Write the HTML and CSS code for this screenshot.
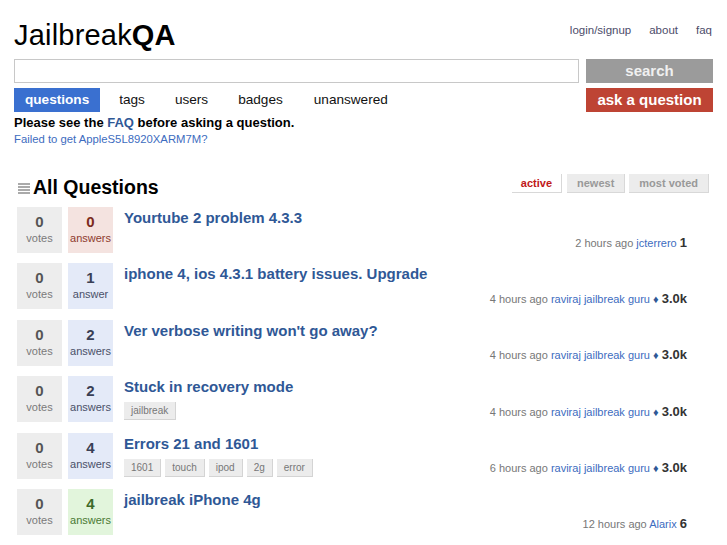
FILE: index.html
```html
<!DOCTYPE html>
<html>
<head>
<meta charset="utf-8">
<title>JailbreakQA</title>
<link rel="stylesheet" href="styles.css">
</head>
<body>
<div class="page">
  <div class="top">
    <div class="logo">Jailbreak<b>QA</b></div>
    <div class="toplinks"><a>login/signup</a><a>about</a><a>faq</a></div>
  </div>
  <div class="searchrow">
    <div class="searchbox"></div>
    <div class="btn btn-search">search</div>
  </div>
  <div class="navrow">
    <div class="nav">
      <a class="tab on">questions</a><a class="tab">tags</a><a class="tab">users</a><a class="tab">badges</a><a class="tab">unanswered</a>
    </div>
    <div class="btn btn-ask">ask a question</div>
  </div>
  <p class="notice">Please see the <a>FAQ</a> before asking a question.</p>
  <p class="failed"><a>Failed to get AppleS5L8920XARM7M?</a></p>

  <div class="headrow">
    <h1><span class="listicon"><i></i><i></i><i></i><i></i></span>All Questions</h1>
    <div class="sorts"><a class="sort on">active</a><a class="sort">newest</a><a class="sort">most voted</a></div>
  </div>

  <div class="q">
    <div class="stats"><div class="box votes"><b>0</b><span>votes</span></div><div class="box ans zero"><b>0</b><span>answers</span></div></div>
    <div class="body"><h2>Yourtube 2 problem 4.3.3</h2>
      <div class="foot"><div class="tags"></div><div class="meta">2 hours ago <a>jcterrero</a> <b>1</b></div></div></div>
  </div>
  <div class="q">
    <div class="stats"><div class="box votes"><b>0</b><span>votes</span></div><div class="box ans some"><b>1</b><span>answer</span></div></div>
    <div class="body"><h2>iphone 4, ios 4.3.1 battery issues. Upgrade</h2>
      <div class="foot"><div class="tags"></div><div class="meta">4 hours ago <a>raviraj jailbreak guru</a> <em>&#9830;</em> <b>3.0k</b></div></div></div>
  </div>
  <div class="q">
    <div class="stats"><div class="box votes"><b>0</b><span>votes</span></div><div class="box ans some"><b>2</b><span>answers</span></div></div>
    <div class="body"><h2>Ver verbose writing won't go away?</h2>
      <div class="foot"><div class="tags"></div><div class="meta">4 hours ago <a>raviraj jailbreak guru</a> <em>&#9830;</em> <b>3.0k</b></div></div></div>
  </div>
  <div class="q">
    <div class="stats"><div class="box votes"><b>0</b><span>votes</span></div><div class="box ans some"><b>2</b><span>answers</span></div></div>
    <div class="body"><h2>Stuck in recovery mode</h2>
      <div class="foot"><div class="tags"><span class="tag">jailbreak</span></div><div class="meta">4 hours ago <a>raviraj jailbreak guru</a> <em>&#9830;</em> <b>3.0k</b></div></div></div>
  </div>
  <div class="q">
    <div class="stats"><div class="box votes"><b>0</b><span>votes</span></div><div class="box ans some"><b>4</b><span>answers</span></div></div>
    <div class="body"><h2>Errors 21 and 1601</h2>
      <div class="foot"><div class="tags"><span class="tag">1601</span><span class="tag">touch</span><span class="tag">ipod</span><span class="tag">2g</span><span class="tag">error</span></div><div class="meta">6 hours ago <a>raviraj jailbreak guru</a> <em>&#9830;</em> <b>3.0k</b></div></div></div>
  </div>
  <div class="q">
    <div class="stats"><div class="box votes"><b>0</b><span>votes</span></div><div class="box ans accepted"><b>4</b><span>answers</span></div></div>
    <div class="body"><h2>jailbreak iPhone 4g</h2>
      <div class="foot"><div class="tags"></div><div class="meta">12 hours ago <a>Alarix</a> <b>6</b></div></div></div>
  </div>
</div>
</body>
</html>
```

FILE: styles.css
```css
html, body { margin: 0; padding: 0; background: #fff; }
body { font-family: "Liberation Sans", Arial, sans-serif; color: #000; }
a { text-decoration: none; cursor: pointer; }
.page { padding: 0 14px; }

.top { display: flex; justify-content: space-between; align-items: flex-start; height: 59px; }
.logo { font-size: 29px; line-height: 32px; padding-top: 19px; color: #000; letter-spacing: 0.2px; }
.logo b { font-weight: bold; }
.toplinks { display: flex; gap: 18px; padding-top: 23px; font-size: 11.5px; line-height: 14px; margin-right: 1px; }
.toplinks a { color: #4c4c6a; }

.searchrow { display: flex; gap: 7px; height: 24px; }
.searchbox { flex: 1; border: 1px solid #c8c8c8; box-sizing: border-box; height: 24px; background: #fff; }
.btn { width: 127px; height: 24px; box-sizing: border-box; text-align: center; font-weight: bold; font-size: 15px; line-height: 24px; }
.btn-search { background: #9b9b9b; color: #f0f0f0; }
.btn-ask { background: #be4434; color: #fff; }

.navrow { display: flex; justify-content: space-between; margin-top: 5px; height: 24px; }
.nav { display: flex; }
.tab { padding: 0 11px; margin-right: 8px; font-size: 13.6px; line-height: 24px; color: #111; }
.tab.on { background: #3a70d0; color: #fff; font-weight: bold; }
.tab:nth-child(4) { margin-right: 9px; }

.notice { margin: 3px 0 0; font-size: 13px; line-height: 15px; font-weight: bold; }
.notice a { color: #2f5896; }
.failed { margin: 2px 0 0; font-size: 11.3px; line-height: 15px; }
.failed a { color: #3d6cc0; }

.headrow { display: flex; justify-content: space-between; align-items: flex-start; margin-top: 27px; height: 20px; }
h1 { margin: 2px 0 0; display: flex; align-items: center; font-size: 19.5px; line-height: 22px; font-weight: bold; }
.listicon { display: flex; flex-direction: column; gap: 1px; width: 12px; margin: 2px 3px 0 4px; }
.listicon i { display: block; height: 2px; background: #aaa; }
.sorts { display: flex; margin-right: 4px; }
.sort { font-size: 11px; font-weight: bold; line-height: 18px; height: 18px; padding: 0 10px; margin-left: 4px; background: #ececec; color: #999; border-right: 1px solid #d8d8d8; border-bottom: 1px solid #d8d8d8; }
.sort.on { background: #fff; color: #c01818; margin-left: 0; padding: 0 9px; }
.sort.on + .sort { margin-left: 5px; }

.q { display: flex; margin-top: 10.4px; }
.headrow + .q { margin-top: 13px; }
.stats { display: flex; gap: 6px; margin-left: 3px; margin-right: 11px; }
.box { width: 45px; height: 46px; display: flex; flex-direction: column; align-items: center; }
.box b { font-size: 15px; line-height: 17px; margin-top: 6px; }
.box span { font-size: 11px; line-height: 13px; margin-top: 2px; }
.votes { background: #ededed; }
.votes b { color: #555; }
.votes span { color: #7a7a7a; }
.ans.zero { background: #f4e3e0; }
.ans.zero b { color: #7c2b20; }
.ans.zero span { color: #8e3a2e; }
.ans.some { background: #e4eaf8; }
.ans.some b { color: #3a3f55; }
.ans.some span { color: #4a5068; }
.ans.accepted { background: #e2f5dc; }
.ans.accepted b { color: #3e6a28; }
.ans.accepted span { color: #4a7a34; }

.body { flex: 1; padding-right: 26px; }
h2 { margin: 0; padding-top: 1px; font-size: 15px; line-height: 20px; font-weight: bold; color: #2f5896; }
.foot { display: flex; justify-content: space-between; align-items: center; margin-top: 5px; height: 18px; }
.tags { display: flex; gap: 4px; }
.tag { font-size: 10px; line-height: 17px; height: 17px; padding: 0 7px; background: #ececec; color: #777; border-right: 1px solid #d4d4d4; border-bottom: 1px solid #d4d4d4; }
.meta { font-size: 11px; color: #777; white-space: nowrap; }
.meta a { color: #3d6cc0; }
.meta em { font-style: normal; color: #2f5896; font-size: 11px; }
.meta b { color: #333; font-size: 13px; }
```
